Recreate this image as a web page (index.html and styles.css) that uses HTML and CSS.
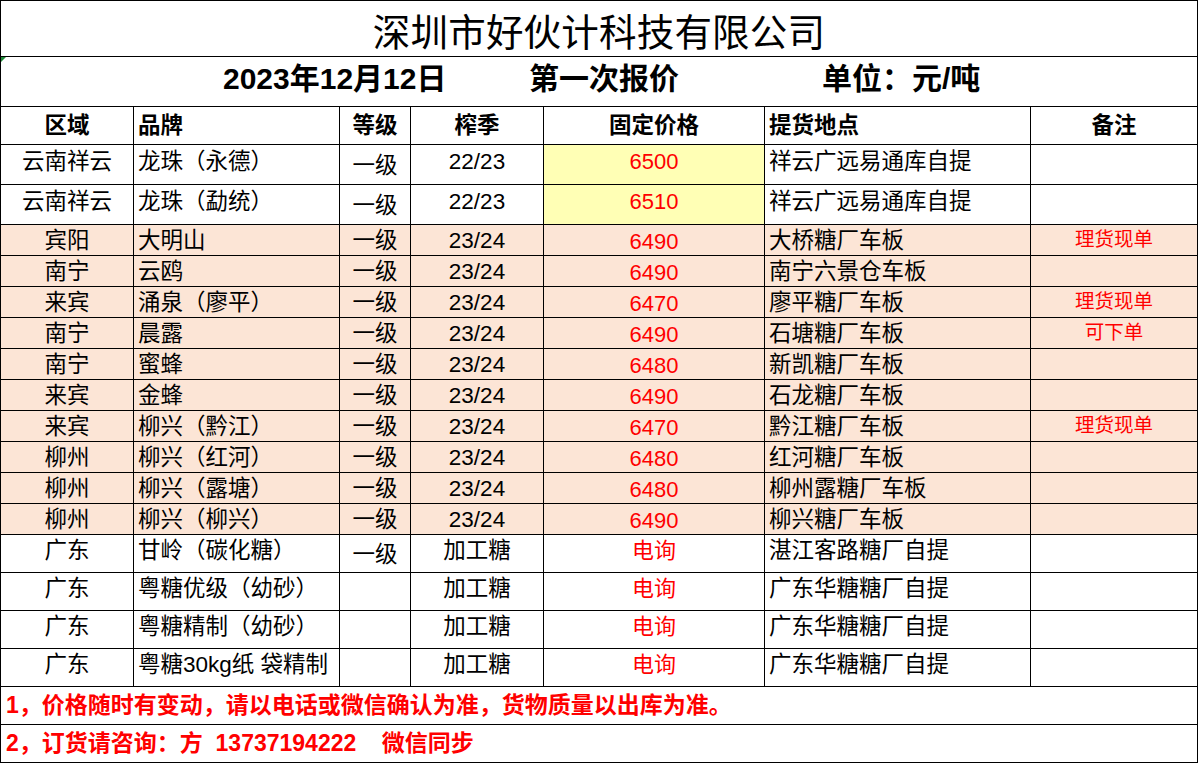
FILE: index.html
```html
<!DOCTYPE html>
<html lang="zh-CN">
<head>
<meta charset="utf-8">
<title>深圳市好伙计科技有限公司 报价</title>
<link rel="stylesheet" href="styles.css">
</head>
<body>
<div class="sheet">
  <div class="c span title">深圳市好伙计科技有限公司</div>
  <div class="c span dateRow">
    <span class="marker"></span>
    <span class="d1">2023年12月12日</span>
    <span class="d2">第一次报价</span>
    <span class="d3">单位：元/吨</span>
  </div>

  <div class="c ctr hd">区域</div>
  <div class="c left hd">品牌</div>
  <div class="c ctr hd">等级</div>
  <div class="c ctr hd">榨季</div>
  <div class="c ctr hd">固定价格</div>
  <div class="c left hd">提货地点</div>
  <div class="c ctr hd">备注</div>

  <div class="c ctr hi">云南祥云</div>
  <div class="c left hi">龙珠（永德）</div>
  <div class="c ctr grade hi">一级</div>
  <div class="c ctr hi">22/23</div>
  <div class="c ctr hi yellow price">6500</div>
  <div class="c left hi">祥云广远易通库自提</div>
  <div class="c ctr note"></div>

  <div class="c ctr hi">云南祥云</div>
  <div class="c left hi">龙珠（勐统）</div>
  <div class="c ctr grade hi">一级</div>
  <div class="c ctr hi">22/23</div>
  <div class="c ctr hi yellow price">6510</div>
  <div class="c left hi">祥云广远易通库自提</div>
  <div class="c ctr note"></div>

  <div class="c ctr peach">宾阳</div>
  <div class="c left peach">大明山</div>
  <div class="c ctr peach grade">一级</div>
  <div class="c ctr peach">23/24</div>
  <div class="c ctr peach price">6490</div>
  <div class="c left peach">大桥糖厂车板</div>
  <div class="c ctr peach note">理货现单</div>

  <div class="c ctr peach">南宁</div>
  <div class="c left peach">云鸥</div>
  <div class="c ctr peach grade">一级</div>
  <div class="c ctr peach">23/24</div>
  <div class="c ctr peach price">6490</div>
  <div class="c left peach">南宁六景仓车板</div>
  <div class="c ctr peach note"></div>

  <div class="c ctr peach">来宾</div>
  <div class="c left peach">涌泉（廖平）</div>
  <div class="c ctr peach grade">一级</div>
  <div class="c ctr peach">23/24</div>
  <div class="c ctr peach price">6470</div>
  <div class="c left peach">廖平糖厂车板</div>
  <div class="c ctr peach note">理货现单</div>

  <div class="c ctr peach">南宁</div>
  <div class="c left peach">晨露</div>
  <div class="c ctr peach grade">一级</div>
  <div class="c ctr peach">23/24</div>
  <div class="c ctr peach price">6490</div>
  <div class="c left peach">石塘糖厂车板</div>
  <div class="c ctr peach note">可下单</div>

  <div class="c ctr peach">南宁</div>
  <div class="c left peach">蜜蜂</div>
  <div class="c ctr peach grade">一级</div>
  <div class="c ctr peach">23/24</div>
  <div class="c ctr peach price">6480</div>
  <div class="c left peach">新凯糖厂车板</div>
  <div class="c ctr peach note"></div>

  <div class="c ctr peach">来宾</div>
  <div class="c left peach">金蜂</div>
  <div class="c ctr peach grade">一级</div>
  <div class="c ctr peach">23/24</div>
  <div class="c ctr peach price">6490</div>
  <div class="c left peach">石龙糖厂车板</div>
  <div class="c ctr peach note"></div>

  <div class="c ctr peach">来宾</div>
  <div class="c left peach">柳兴（黔江）</div>
  <div class="c ctr peach grade">一级</div>
  <div class="c ctr peach">23/24</div>
  <div class="c ctr peach price">6470</div>
  <div class="c left peach">黔江糖厂车板</div>
  <div class="c ctr peach note">理货现单</div>

  <div class="c ctr peach">柳州</div>
  <div class="c left peach">柳兴（红河）</div>
  <div class="c ctr peach grade">一级</div>
  <div class="c ctr peach">23/24</div>
  <div class="c ctr peach price">6480</div>
  <div class="c left peach">红河糖厂车板</div>
  <div class="c ctr peach note"></div>

  <div class="c ctr peach">柳州</div>
  <div class="c left peach">柳兴（露塘）</div>
  <div class="c ctr peach grade">一级</div>
  <div class="c ctr peach">23/24</div>
  <div class="c ctr peach price">6480</div>
  <div class="c left peach">柳州露糖厂车板</div>
  <div class="c ctr peach note"></div>

  <div class="c ctr peach">柳州</div>
  <div class="c left peach">柳兴（柳兴）</div>
  <div class="c ctr peach grade">一级</div>
  <div class="c ctr peach">23/24</div>
  <div class="c ctr peach price">6490</div>
  <div class="c left peach">柳兴糖厂车板</div>
  <div class="c ctr peach note"></div>

  <div class="c ctr hi">广东</div>
  <div class="c left hi">甘岭（碳化糖）</div>
  <div class="c ctr grade hi">一级</div>
  <div class="c ctr hi">加工糖</div>
  <div class="c ctr hi price">电询</div>
  <div class="c left hi">湛江客路糖厂自提</div>
  <div class="c ctr note"></div>

  <div class="c ctr hi">广东</div>
  <div class="c left hi">粤糖优级（幼砂）</div>
  <div class="c ctr grade hi"></div>
  <div class="c ctr hi">加工糖</div>
  <div class="c ctr hi price">电询</div>
  <div class="c left hi">广东华糖糖厂自提</div>
  <div class="c ctr note"></div>

  <div class="c ctr hi">广东</div>
  <div class="c left hi">粤糖精制（幼砂）</div>
  <div class="c ctr grade hi"></div>
  <div class="c ctr hi">加工糖</div>
  <div class="c ctr hi price">电询</div>
  <div class="c left hi">广东华糖糖厂自提</div>
  <div class="c ctr note"></div>

  <div class="c ctr hi">广东</div>
  <div class="c left hi">粤糖30kg纸 袋精制</div>
  <div class="c ctr grade hi"></div>
  <div class="c ctr hi">加工糖</div>
  <div class="c ctr hi price">电询</div>
  <div class="c left hi">广东华糖糖厂自提</div>
  <div class="c ctr note"></div>

  <div class="c span foot">1，价格随时有变动，请以电话或微信确认为准，货物质量以出库为准。</div>
  <div class="c span foot">2，订货请咨询：方  13737194222    微信同步</div>
</div>
</body>
</html>
```

FILE: styles.css
```css
html, body {
  margin: 0;
  padding: 0;
  background: #ffffff;
}

.sheet {
  display: grid;
  grid-template-columns: 132px 205px 70px 132px 220px 265px 166px;
  grid-template-rows: 55px 49px 37px 39px 39px repeat(10, 30px) repeat(4, 37px) 37px 37px;
  gap: 1px;
  padding: 1px;
  background: #000000;
  width: max-content;
  font-family: "Liberation Sans", "Noto Sans CJK SC", sans-serif;
  font-size: 22.5px;
  color: #000000;
}

.c {
  background: #ffffff;
  display: flex;
  align-items: center;
  line-height: 1;
  white-space: nowrap;
  overflow: hidden;
}

.span {
  grid-column: 1 / -1;
}

.ctr {
  justify-content: center;
}

.left {
  padding-left: 4px;
}

.hd {
  font-weight: bold;
  padding-top: 1px;
}

.hi {
  padding-bottom: 5px;
}

.grade.hi {
  padding-bottom: 0;
  padding-top: 3px;
}

.peach {
  background: #fce5d6;
  padding-top: 3px;
}

.peach.note {
  padding-top: 0;
}

.yellow {
  background: #ffffb5;
}

.price {
  color: #ff0000;
  font-size: 22px;
}

.note {
  color: #ff0000;
  font-size: 19.5px;
}

.title {
  justify-content: center;
  font-family: "Noto Sans CJK SC", sans-serif;
  font-size: 37.5px;
  letter-spacing: 0.2px;
  padding-top: 3px;
}

.dateRow {
  position: relative;
  font-weight: bold;
  font-size: 30px;
  padding-left: 222px;
  padding-bottom: 5px;
}

.d1 {
  width: 306px;
}

.d2 {
  width: 293px;
}

.marker {
  position: absolute;
  left: 0;
  top: 0;
  width: 0;
  height: 0;
  border-top: 5px solid #1f8a38;
  border-right: 5px solid transparent;
}

.foot {
  color: #ff0000;
  font-weight: bold;
  font-size: 23px;
  padding-left: 5px;
  white-space: pre;
}
```
